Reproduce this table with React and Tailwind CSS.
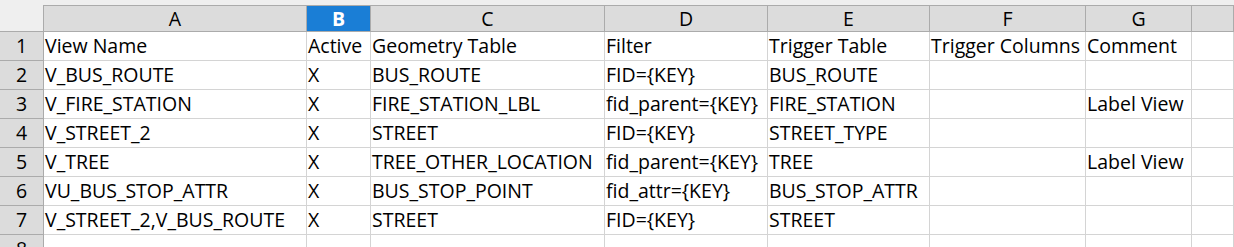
// Spreadsheet view: column headers A–G, row numbers, view/trigger config rows.

const COLS = ['A', 'B', 'C', 'D', 'E', 'F', 'G', '']
const SELECTED = 'B'

const ROWS = [
  ['View Name', 'Active', 'Geometry Table', 'Filter', 'Trigger Table', 'Trigger Columns', 'Comment', ''],
  ['V_BUS_ROUTE', 'X', 'BUS_ROUTE', 'FID={KEY}', 'BUS_ROUTE', '', '', ''],
  ['V_FIRE_STATION', 'X', 'FIRE_STATION_LBL', 'fid_parent={KEY}', 'FIRE_STATION', '', 'Label View', ''],
  ['V_STREET_2', 'X', 'STREET', 'FID={KEY}', 'STREET_TYPE', '', '', ''],
  ['V_TREE', 'X', 'TREE_OTHER_LOCATION', 'fid_parent={KEY}', 'TREE', '', 'Label View', ''],
  ['VU_BUS_STOP_ATTR', 'X', 'BUS_STOP_POINT', 'fid_attr={KEY}', 'BUS_STOP_ATTR', '', '', ''],
  ['V_STREET_2,V_BUS_ROUTE', 'X', 'STREET', 'FID={KEY}', 'STREET', '', '', ''],
  ['', '', '', '', '', '', '', ''],
]

export default function App() {
  return (
    <div className="w-[1234px] h-[247px] overflow-hidden bg-[#efefef] pt-[5px] font-['Open_Sans',sans-serif] text-[19.5px] text-black">
      <div className="grid grid-cols-[44px_263px_64px_234px_163px_162px_156px_106px_1fr] grid-rows-[27px_repeat(8,29px)] bg-white">
        {/* corner */}
        <div className="bg-[#efefef] border-r border-b border-[#ababab]" />

        {COLS.map((c, i) => {
          const sel = c === SELECTED
          return (
            <div
              key={i}
              className={
                sel
                  ? 'border-t border-r border-b border-[#ababab] bg-[#1a7ed6] text-white font-bold text-center leading-[25px]'
                  : 'border-t border-r border-b border-[#ababab] bg-[#dcdcdc] text-center leading-[25px]'
              }
            >
              {c}
            </div>
          )
        })}

        {ROWS.map((row, r) => (
          <div key={r} className="contents">
            <div className="bg-[#dcdcdc] border-r border-b border-[#ababab] text-center leading-[28px]">
              {r + 1}
            </div>
            {row.map((v, j) => (
              <div
                key={j}
                className="border-r border-b border-[#d4d4d4] pl-[1px] leading-[28px] whitespace-nowrap overflow-hidden"
              >
                {v}
              </div>
            ))}
          </div>
        ))}
      </div>
    </div>
  )
}
